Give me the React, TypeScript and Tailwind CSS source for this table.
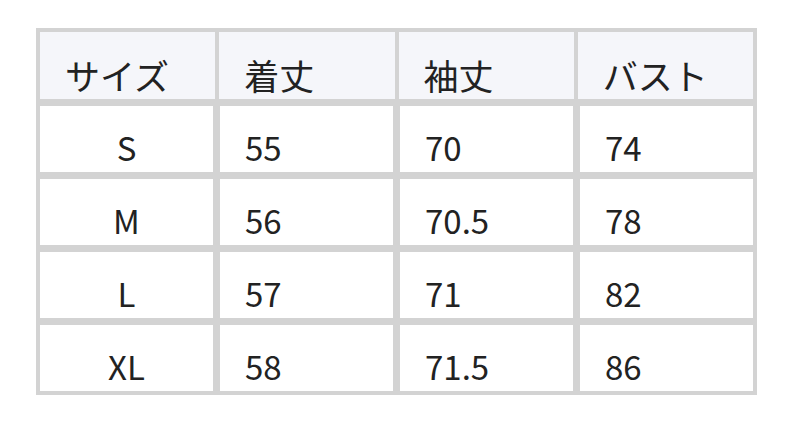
const headers = ["サイズ", "着丈", "袖丈", "バスト"];

const rows = [
  ["S", "55", "70", "74"],
  ["M", "56", "70.5", "78"],
  ["L", "57", "71", "82"],
  ["XL", "58", "71.5", "86"],
];

export default function App() {
  return (
    <div
      className="h-[422px] w-[792px] bg-white pl-[36px] pt-[28px] text-[33px] text-[#222]"
      style={{ fontFamily: '"Noto Sans CJK JP", "Noto Sans", sans-serif' }}
    >
      <div className="flex w-[721px] flex-col gap-[7px] bg-[#d3d3d3] p-[4px]">
        {/* header row */}
        <div className="grid grid-cols-4 gap-x-[4px]">
          {headers.map((h) => (
            <div
              key={h}
              className="h-[67px] bg-[#f5f6fa] pl-[25px] pt-[25px] text-[35px] leading-[35px]"
            >
              {h}
            </div>
          ))}
        </div>

        {rows.map((row) => (
          <div key={row[0]} className="grid grid-cols-4 gap-x-[7px]">
            {row.map((cell, i) => (
              <div
                key={i}
                className={
                  i === 0
                    ? "h-[66px] bg-white pt-[25px] text-center leading-[33px]"
                    : "h-[66px] bg-white pl-[25px] pt-[25px] leading-[33px]"
                }
              >
                {cell}
              </div>
            ))}
          </div>
        ))}
      </div>
    </div>
  );
}
